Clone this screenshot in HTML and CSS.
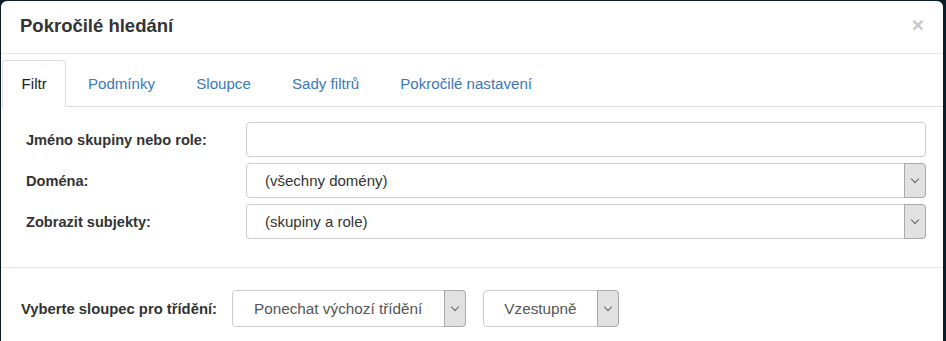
FILE: index.html
```html
<!DOCTYPE html>
<html>
<head>
<meta charset="utf-8"/>
<title>Pokročilé hledání</title>
<link rel="stylesheet" href="styles.css">
</head>
<body>
	<div class="modal">
		<!-- hlavička -->
		<div class="modal-header">
			<h4>Pokročilé hledání</h4>
			<span class="close">×</span>
		</div>
		<!-- záložky -->
		<ul class="tabs">
			<li class="active"><a>Filtr</a></li>
			<li><a>Podmínky</a></li>
			<li><a>Sloupce</a></li>
			<li><a>Sady filtrů</a></li>
			<li><a>Pokročilé nastavení</a></li>
		</ul>
		<div class="filter-form">
			<label>Jméno skupiny nebo role:</label>
			<div class="input"></div>
			<label>Doména:</label>
			<div class="select">
				<span class="value">(všechny domény)</span>
				<span class="arrow"><i></i></span>
			</div>
			<label>Zobrazit subjekty:</label>
			<div class="select">
				<span class="value">(skupiny a role)</span>
				<span class="arrow"><i></i></span>
			</div>
		</div>
		<div class="sort-row">
			<label>Vyberte sloupec pro třídění:</label>
			<div class="select sort-col">
				<span class="value">Ponechat výchozí třídění</span>
				<span class="arrow"><i></i></span>
			</div>
			<div class="select sort-dir">
				<span class="value">Vzestupně</span>
				<span class="arrow"><i></i></span>
			</div>
		</div>
	</div>
</body>
</html>
```

FILE: styles.css
```css
*{padding: 0;margin: 0;box-sizing: border-box;}
html,body{
	width: 100%;
	height: 100%;
}
body{
	background: #0b1d28;
	font-family: "Liberation Sans", Arial, sans-serif;
	color: #333;
	overflow: hidden;
}
.modal{
	margin: 1px 3px 0 1px;
	height: calc(100% - 1px);
	background: #fff;
	border-radius: 6px 6px 0 0;
}
.modal-header{
	height: 53px;
	padding: 0 19px 0 19px;
	display: flex;
	align-items: center;
	justify-content: space-between;
	border-bottom: 1px solid #e5e5e5;
}
.modal-header h4{
	font-size: 18.5px;
	font-weight: bold;
	color: #333;
	margin-top: -2px;
}
.close{
	font-size: 21px;
	font-weight: bold;
	color: #c8c8c8;
	line-height: 1;
	margin-top: -5px;
}
.tabs{
	list-style: none;
	display: flex;
	margin-top: 6px;
	padding-left: 1px;
	border-bottom: 1px solid #ddd;
}
.tabs li{
	margin-right: 2px;
	margin-bottom: -1px;
}
.tabs a{
	display: block;
	padding: 14px 18.6px 13px 18.6px;
	line-height: 18px;
	font-size: 15.1px;
	color: #3a78b8;
	border: 1px solid transparent;
	border-radius: 4px 4px 0 0;
}
.tabs .active a{
	color: #222;
	background: #fff;
	border-color: #ddd #ddd transparent #ddd;
}
.filter-form{
	display: grid;
	grid-template-columns: 220px 1fr;
	grid-auto-rows: 35px;
	row-gap: 6px;
	padding: 15px 17px 28px 25px;
	border-bottom: 1px solid #e5e5e5;
	align-items: center;
}
label{
	font-size: 14.6px;
	font-weight: bold;
	color: #333;
}
.input, .select{
	height: 35px;
	border: 1px solid #ccc;
	border-radius: 4px;
	background: #fff;
}
.select{
	display: flex;
	align-items: stretch;
}
.select .value{
	flex: 1;
	display: flex;
	align-items: center;
	padding-left: 18px;
	font-size: 15px;
	color: #333;
}
.select .arrow{
	width: 22px;
	margin: -1px -1px -1px 0;
	background: #e1e1e1;
	border: 1px solid #aaa;
	border-radius: 0 4px 4px 0;
	display: flex;
	align-items: center;
	justify-content: center;
}
.arrow i{
	width: 6px;
	height: 6px;
	border-right: 1px solid #666;
	border-bottom: 1px solid #666;
	transform: rotate(45deg);
	margin-top: -3px;
}
.sort-row{
	display: flex;
	align-items: center;
	padding: 22px 0 0 20px;
}
.sort-row label{
	font-size: 14.8px;
	margin-right: 15px;
}
.sort-row .select{
	height: 37px;
}
.sort-row .value{
	font-size: 15.3px;
	color: #555;
}
.sort-col{
	width: 234px;
	margin-right: 17px;
}
.sort-col .value{
	padding-left: 21px;
}
.sort-dir{
	width: 136px;
}
.sort-dir .value{
	justify-content: center;
	padding-left: 0;
}
```
